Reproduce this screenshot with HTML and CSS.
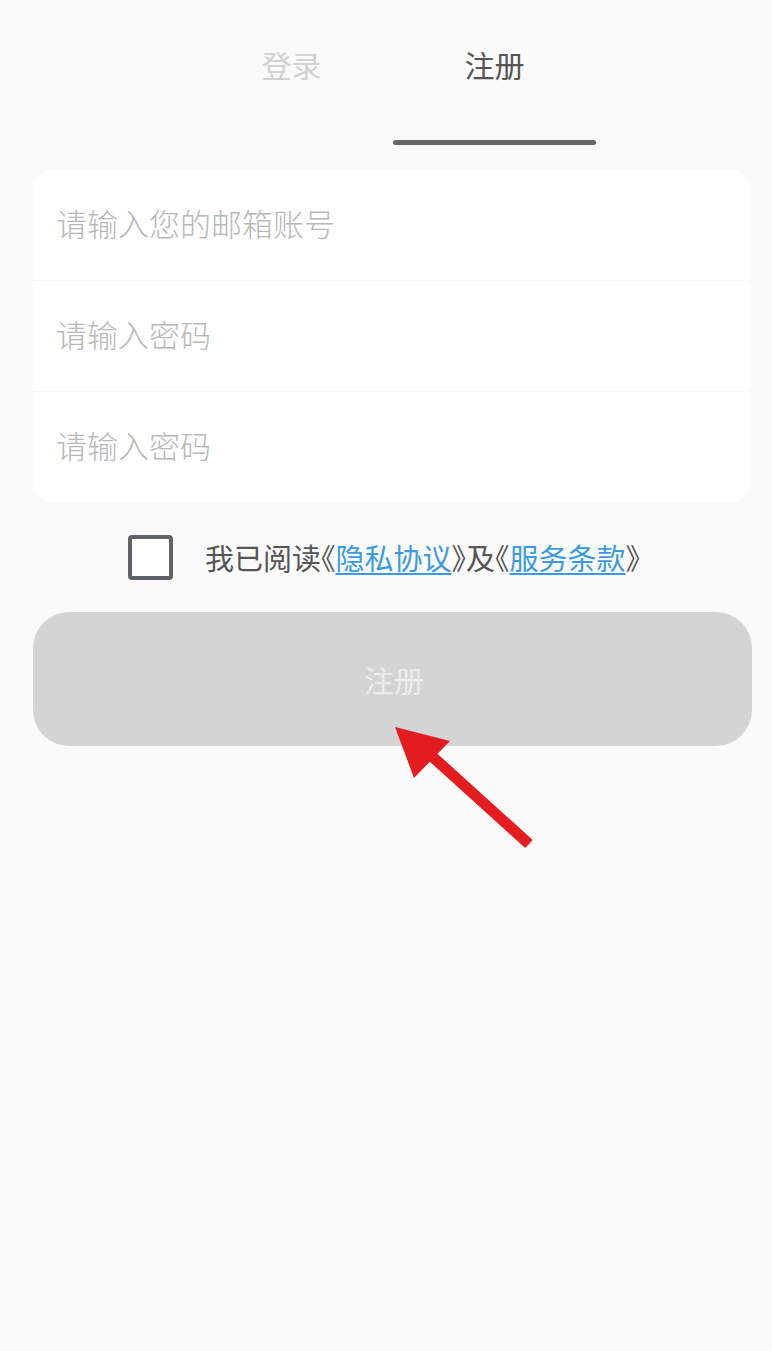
FILE: index.html
```html
<!DOCTYPE html>
<html lang="zh-CN">
<head>
<meta charset="utf-8">
<title>注册</title>
<link rel="stylesheet" href="styles.css">
</head>
<body>
<div class="page">
  <div class="tabs">
    <div class="tab">登录</div>
    <div class="tab active">注册</div>
  </div>
  <div class="card">
    <div class="field">请输入您的邮箱账号</div>
    <div class="field">请输入密码</div>
    <div class="field">请输入密码</div>
  </div>
  <div class="agree">
    <span class="checkbox"></span>
    <span class="agree-text">我已阅读<span class="br">《</span><a class="link">隐私协议</a><span class="br">》</span>及<span class="br">《</span><a class="link">服务条款</a><span class="br">》</span></span>
  </div>
  <div class="btn">注册</div>
  <svg class="arrow" width="160" height="140" viewBox="0 0 160 140">
    <line x1="145" y1="132" x2="40" y2="37" stroke="#e31c1f" stroke-width="11"/>
    <polygon points="11,15 66,29 30,66" fill="#e31c1f"/>
  </svg>
</div>
</body>
</html>
```
FILE: styles.css
```css
* { box-sizing: border-box; }
html, body { margin: 0; padding: 0; }
body {
  background: #fafafa;
  font-family: "Noto Sans CJK SC", "Noto Sans", sans-serif;
  width: 772px;
  height: 1351px;
  overflow: hidden;
}
.page {
  position: relative;
  padding: 0 21px 0 33px;
}
.tabs {
  display: flex;
  padding-left: 157px;
  height: 170px;
}
.tab {
  width: 203px;
  text-align: center;
  font-size: 30px;
  color: #d2d2d2;
  padding-top: 41px;
  line-height: 46px;
  height: 145px;
}
.tab.active {
  color: #555;
  position: relative;
}
.tab.active::after {
  content: "";
  position: absolute;
  left: 0;
  right: 0;
  bottom: 0;
  height: 5px;
  border-radius: 3px;
  background: #666;
}
.card {
  background: #fff;
  border-radius: 20px;
  width: 717px;
  display: flex;
  flex-direction: column;
}
.field {
  height: 111px;
  display: flex;
  align-items: center;
  padding-left: 23px;
  padding-bottom: 5px;
  font-size: 31px;
  font-weight: 300;
  color: #b8b8b8;
  border-bottom: 1px solid #f6f6f6;
}
.field:last-child {
  border-bottom: none;
  height: 110px;
}
.agree {
  display: flex;
  align-items: center;
  height: 110px;
  padding-left: 95px;
}
.checkbox {
  width: 45px;
  height: 45px;
  border: 4px solid #5f6266;
  border-radius: 4px;
  background: #fff;
}
.agree-text {
  margin-left: 32px;
  font-size: 29px;
  color: #555;
}
.br {
  font-feature-settings: "halt" 1;
}
.link {
  color: #3a9be2;
  text-decoration: underline;
  text-underline-offset: 3px;
}
.btn {
  width: 719px;
  height: 134px;
  border-radius: 36px;
  background: #d4d4d4;
  color: #ececec;
  font-size: 30px;
  display: flex;
  align-items: center;
  justify-content: center;
  padding-left: 3px;
}
.arrow {
  position: absolute;
  left: 384px;
  top: 712px;
}
```
